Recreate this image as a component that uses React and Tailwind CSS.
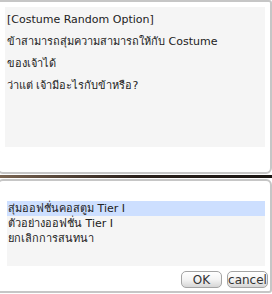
import React from "react";

const Button = ({ children }) => (
    <button className="h-[17px] w-[41px] rounded-[5px] border border-[#a4a4a4] bg-gradient-to-b from-white via-[#f4f4f4] to-[#d6d6d6] text-[12px] leading-[14px] text-[#333]">
        {children}
    </button>
);

const App = () => {
    const options = [
        "สุ่มออฟชั่นคอสตูม Tier I",
        "ตัวอย่างออฟชั่น Tier I",
        "ยกเลิกการสนทนา",
    ];

    return (
        <div className="w-[272px] h-[294px] bg-white overflow-hidden flex flex-col text-[11px] text-[#222]" style={{ fontFamily: "Tahoma, 'DejaVu Sans', 'Noto Sans', sans-serif" }}>
            {/* dialog text panel */}
            <div className="h-[174px] -ml-[3px] border-2 border-[#c6c6c6] rounded-tr-[3px] rounded-br-[6px] rounded-bl-[6px] pt-[5px] pl-[6px] pr-[5px]">
                <div className="h-[140px] bg-[#f5f5f5] pl-[2px] pt-[2px] leading-[22px]">
                    <p>[Costume Random Option]</p>
                    <p>ข้าสามารถสุ่มความสามารถให้กับ Costume</p>
                    <p>ของเจ้าได้</p>
                    <p>ว่าแต่ เจ้ามีอะไรกับข้าหรือ?</p>
                </div>
            </div>

            <div className="h-[3px] mt-[1px] bg-gradient-to-r from-[#7a6552] via-[#2b211c] to-[#1a1512]"></div>

            {/* answers panel */}
            <div className="flex-1 mt-[1px] -ml-[3px] mb-[1px] border-2 border-[#c6c6c6] rounded-tr-[6px] rounded-tl-[6px] rounded-br-[3px] rounded-bl-[3px] pl-[8px] pr-[5px] pt-[20px] flex flex-col">
                <div className="h-[65px] bg-[#f5f5f5] leading-[15px]">
                    {options.map((o, i) => (
                        <div key={o} className={"pl-[1px] " + (i === 0 ? "bg-[#cddfff]" : "")}>
                            {o}
                        </div>
                    ))}
                </div>
                <div className="flex justify-end gap-[5px] mt-[5px] -mr-[3px]">
                    <Button>OK</Button>
                    <Button>cancel</Button>
                </div>
            </div>
        </div>
    );
};

export default App;
